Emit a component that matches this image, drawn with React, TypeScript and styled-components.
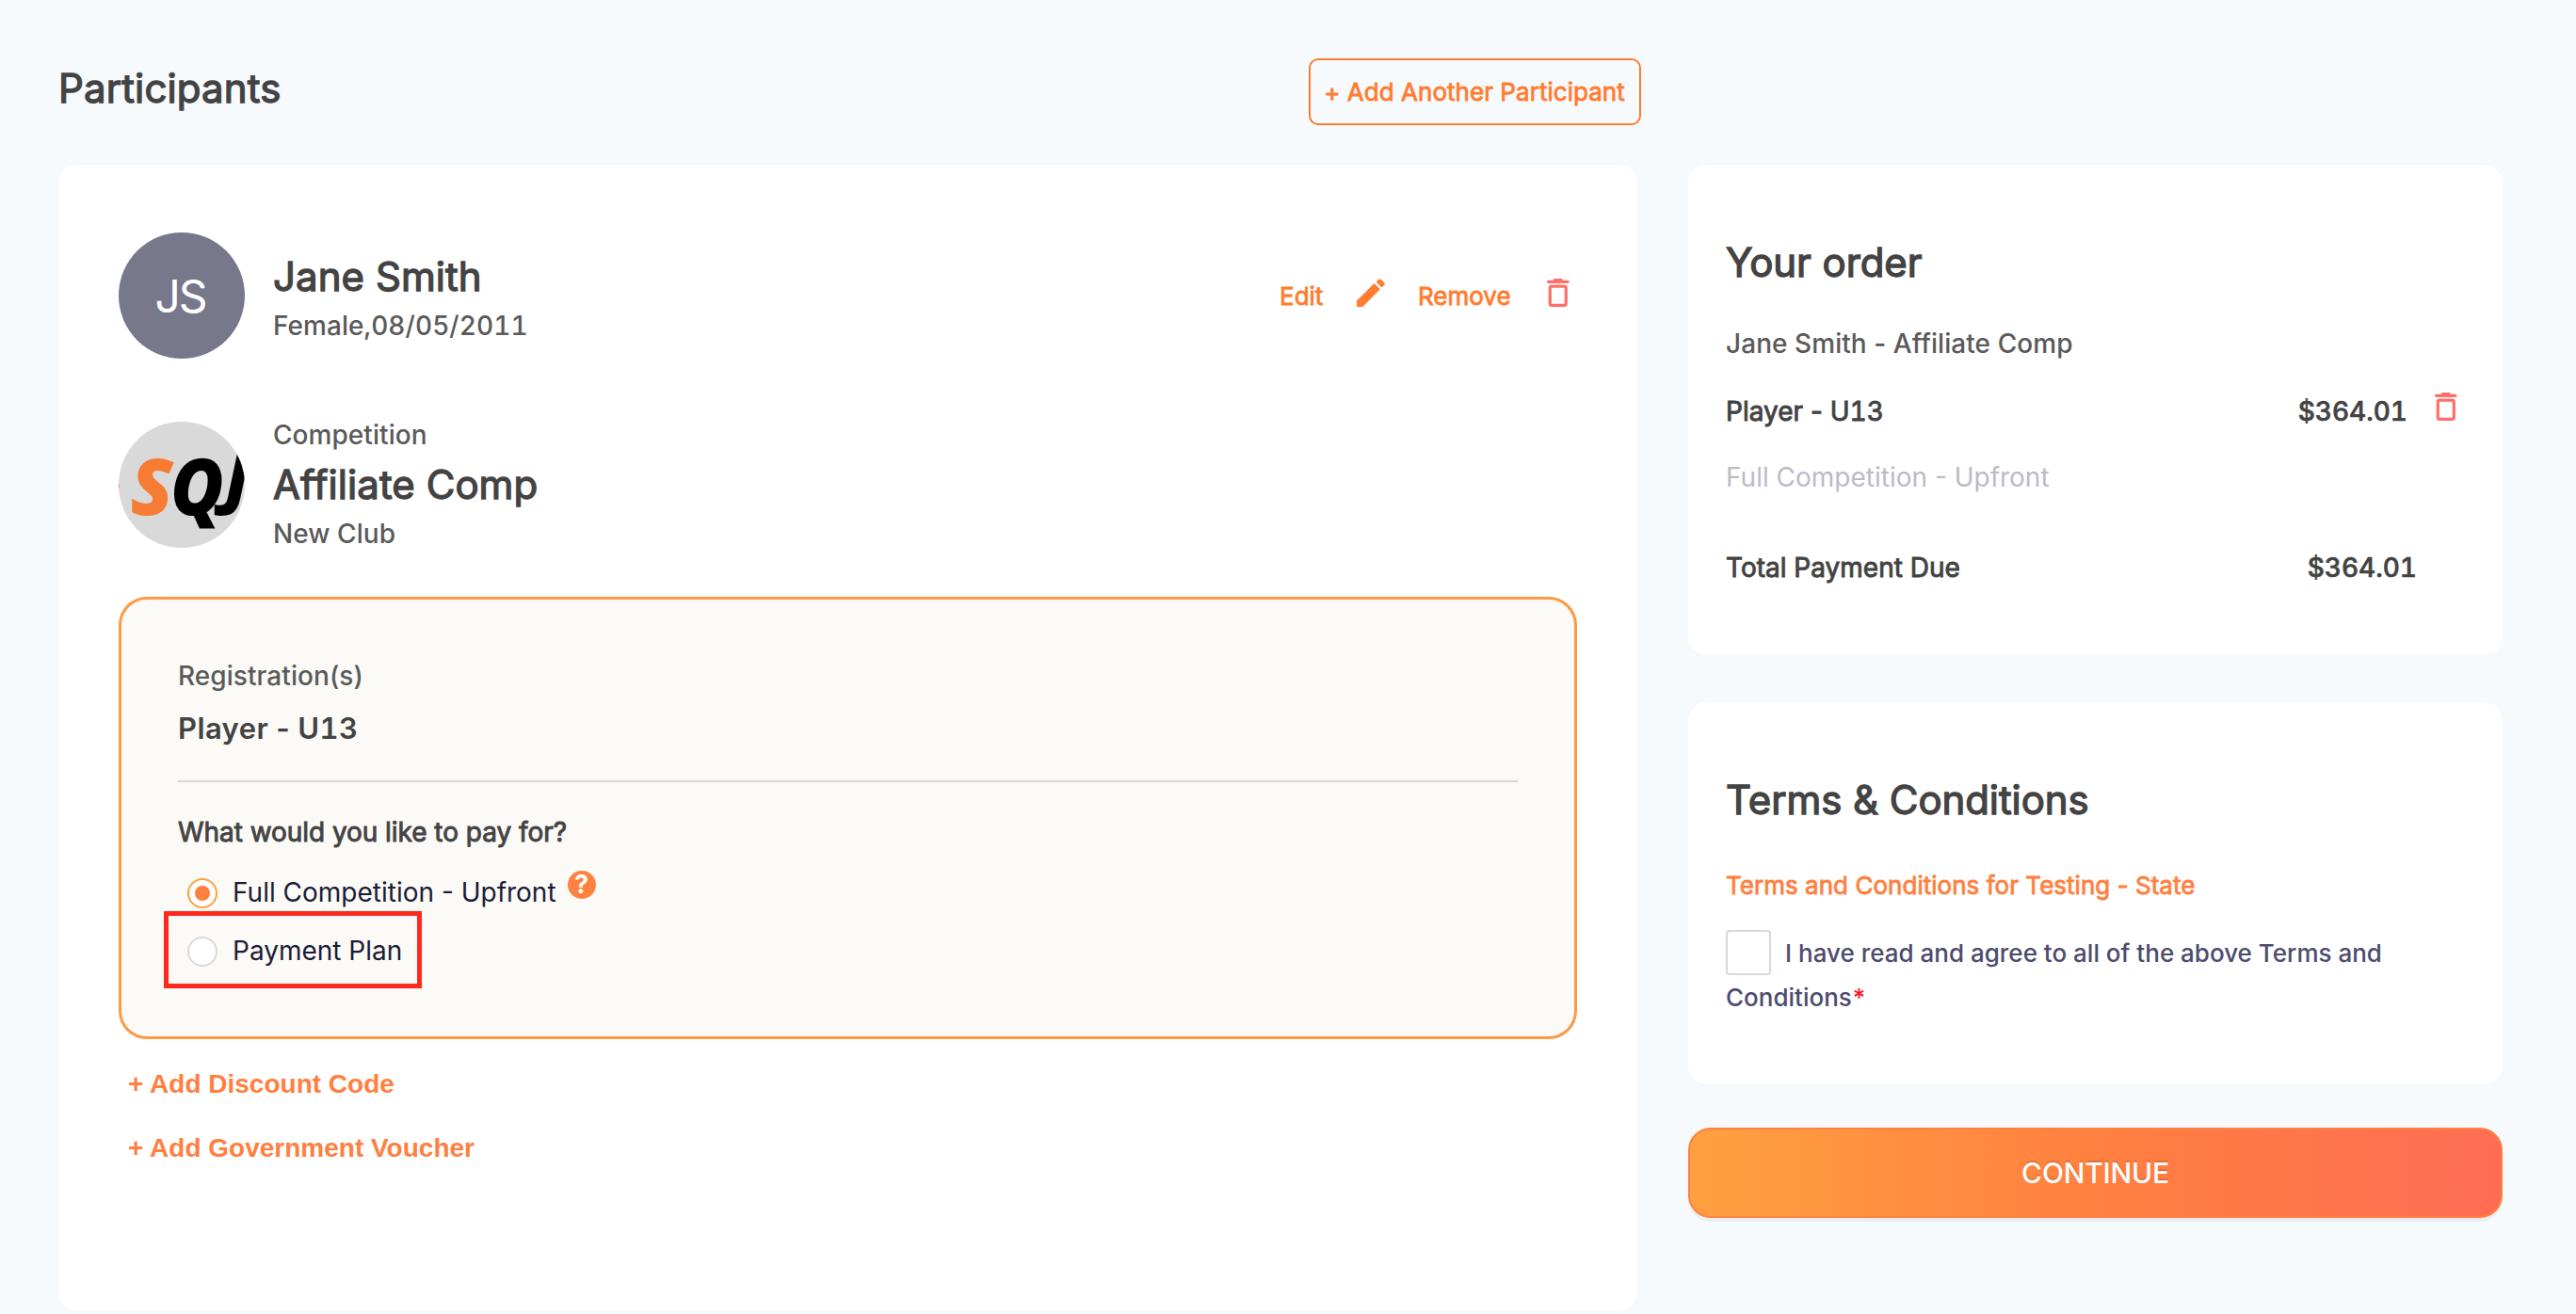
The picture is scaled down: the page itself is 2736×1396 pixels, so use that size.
import styled, { createGlobalStyle, css } from "styled-components";

const GlobalStyle = createGlobalStyle`
  * {
    box-sizing: border-box;
  }
  body {
    margin: 0;
    background: #f6fafd;
    font-family: Inter, "Liberation Sans", sans-serif;
    color: #434343;
    overflow: hidden;
  }
`;

/* thickens the regular cut of the font */
const heavy = (width: number) => css`
  -webkit-text-stroke: ${width}px currentColor;
`;

const Page = styled.div`
  display: grid;
  grid-template-columns: 1681px 865px;
  column-gap: 50px;
  height: 1396px;
  padding: 62px 0 0 62px;
  overflow: hidden;
`;

const Main = styled.main`
  display: flex;
  flex-direction: column;
`;

const Header = styled.header`
  display: flex;
  justify-content: space-between;
  height: 71px;
  margin-bottom: 42px;
`;

const Title = styled.h2`
  margin: 0;
  font-size: 42px;
  font-weight: 400;
  line-height: 60px;
  ${heavy(1.3)}
`;

const PageTitle = styled(Title)`
  line-height: 64px;
  letter-spacing: 0.12px;
`;

const CardTitle = styled(Title)`
  letter-spacing: -0.08px;
`;

const AddButton = styled.button`
  width: 353px;
  padding: 0 1px 0 0;
  border: 2px solid #ff7c30;
  border-radius: 10px;
  background: transparent;
  color: #ff7c30;
  font-family: inherit;
  font-size: 26px;
  letter-spacing: 0.04px;
  ${heavy(0.8)}
`;

const Card = styled.section`
  background: #fff;
  border-radius: 20px;
`;

const ParticipantCard = styled(Card)`
  width: 1677px;
  height: 1217px;
  padding: 72px 64px 0;
`;

const Profile = styled.div`
  display: flex;
  height: 134px;
`;

const Competition = styled.div`
  display: flex;
  height: 156px;
  margin: 55px 0 42px;
`;

const Avatar = styled.div`
  display: flex;
  align-items: center;
  justify-content: center;
  width: 134px;
  height: 134px;
  padding-right: 3px;
  border-radius: 50%;
  background: #78788d;
  color: #fff;
  font-size: 48px;
  letter-spacing: -2px;
`;

const ClubLogo = styled.svg`
  width: 134px;
  height: 134px;
  margin-top: 12px;
  border-radius: 50%;
  background: #d9d9d9;
  font-family: "Open Sans", "Noto Sans", sans-serif;
  font-weight: 800;
  font-style: italic;
`;

const Details = styled.div<{ $top?: number }>`
  margin: ${(p) => p.$top ?? 0}px 0 0 30px;
`;

const Name = styled(Title)`
  line-height: 52px;
  letter-spacing: 0.05px;
`;

const CompetitionName = styled(Name)`
  padding-top: 1px;
`;

const Caption = styled.div<{ $line?: number }>`
  color: #5a5a5a;
  font-size: 28px;
  font-weight: 500;
  line-height: ${(p) => p.$line ?? 52}px;
  letter-spacing: 0.06px;
`;

const Digits = styled.span`
  font-feature-settings: "tnum";
`;

const Actions = styled.div`
  display: flex;
  align-items: center;
  margin: 0 8px 0 auto;
  svg {
    margin-bottom: 6px;
  }
`;

const Action = styled.a<{ $width: number }>`
  width: ${(p) => p.$width}px;
  color: #ff7c30;
  font-size: 26px;
  ${heavy(0.8)}
`;

const PencilSvg = styled.svg`
  width: 30px;
  height: 30px;
  margin-right: 35px;
  fill: #ff7c30;
`;

const TrashSvg = styled.svg`
  flex: none;
  width: 24px;
  height: 30px;
  color: #ff6f69;
`;

const Panel = styled.div`
  height: 470px;
  padding: 53px 60px 0;
  border: 3px solid #ff9a42;
  border-radius: 30px;
  background: #fbfaf6;
`;

const RegistrationName = styled.div`
  font-size: 31px;
  font-weight: 600;
  line-height: 56px;
  letter-spacing: 0.4px;
`;

const Divider = styled.hr`
  height: 2px;
  margin: 27px 0 25px;
  border: 0;
  background: #d9d9d9;
`;

const Strong = styled.div`
  font-size: 28px;
  line-height: 56px;
  ${heavy(0.9)}
`;

const Question = styled(Strong)`
  letter-spacing: -0.05px;
`;

const Options = styled.div`
  margin-top: 6px;
`;

const Option = styled.label`
  position: relative;
  display: flex;
  align-items: center;
  height: 62px;
  padding-left: 10px;
  color: #1c1c37;
  font-size: 28px;
`;

const OptionText = styled.span`
  margin-left: 16px;
  padding-bottom: 2px;
`;

const Radio = styled.span<{ $checked?: boolean }>`
  display: flex;
  align-items: center;
  justify-content: center;
  width: 32px;
  height: 32px;
  border: 2px solid ${(p) => (p.$checked ? "#ff9f40" : "#d9d9d9")};
  border-radius: 50%;
  background: #fff;
  &::after {
    content: "";
    width: 16px;
    height: 16px;
    border-radius: 50%;
    background: ${(p) => (p.$checked ? "#ff8040" : "transparent")};
  }
`;

const Help = styled.span`
  display: flex;
  align-items: center;
  justify-content: center;
  align-self: flex-start;
  width: 30px;
  height: 30px;
  margin: 7px 0 0 12px;
  border-radius: 50%;
  background: #ff8240;
  color: #fff;
  font-size: 27px;
  font-weight: 700;
  line-height: 30px;
`;

const Highlight = styled.span`
  position: absolute;
  left: -15px;
  top: -12px;
  width: 274px;
  height: 82px;
  border: 5px solid #ff2a1d;
`;

const Extras = styled.div`
  display: flex;
  flex-direction: column;
  margin-top: 14px;
  padding-left: 10px;
`;

const ExtraLink = styled.a`
  color: #ff8040;
  font-family: "Liberation Sans", Arial, sans-serif;
  font-size: 28px;
  font-weight: 700;
  line-height: 68px;
`;

const Side = styled.aside`
  padding-top: 113px;
`;

const OrderCard = styled(Card)`
  height: 521px;
  padding: 74px 48px 0 40px;
`;

const OrderRow = styled.div<{ $top: number; $right?: number }>`
  display: flex;
  align-items: center;
  height: 56px;
  margin-top: ${(p) => p.$top}px;
  padding-right: ${(p) => p.$right ?? 0}px;
  svg {
    margin: 0 0 10px 29px;
  }
`;

const Price = styled(Digits)`
  margin-left: auto;
  font-size: 28px;
  font-weight: 500;
  ${heavy(0.6)}
`;

const Muted = styled.span`
  color: #bbbbc6;
  font-size: 28px;
`;

const TermsCard = styled(Card)`
  height: 406px;
  margin: 50px 0 46px;
  padding: 74px 48px 0 40px;
`;

const TermsLink = styled.a`
  display: block;
  margin-top: 36px;
  color: #ff8040;
  font-size: 26px;
  line-height: 50px;
  letter-spacing: 0.03px;
  ${heavy(0.8)}
`;

const Agreement = styled.label`
  display: block;
  margin-top: 23px;
  color: #4c4c6d;
  font-size: 26px;
  font-weight: 500;
  line-height: 47px;
`;

const Checkbox = styled.span`
  display: inline-block;
  width: 48px;
  height: 48px;
  margin: -4px 15px 0 0;
  border: 2px solid #d9d9d9;
  border-radius: 4px;
  background: #fff;
  vertical-align: -14px;
`;

const Required = styled.span`
  display: inline-block;
  margin-left: 1px;
  color: #ff1020;
`;

const ContinueButton = styled.button`
  width: 100%;
  height: 96px;
  border: 2px solid #ff8040;
  border-radius: 24px;
  background: linear-gradient(90deg, #ffa040 0%, #ff8040 50%, #ff6c54 100%);
  box-shadow: 0 4px 0 rgba(0, 0, 0, 0.043);
  color: #fff;
  font-family: inherit;
  font-size: 30px;
  font-weight: 550;
  letter-spacing: -0.2px;
  text-shadow: 0 -2px 0 rgba(0, 0, 0, 0.12);
`;

function Trash() {
  return (
    <TrashSvg viewBox="0 0 24 30">
      <path
        d="M1.6 1.7H6.4L7.8 0H15.6L17 1.7H22a1.6 1.6 0 0 1 0 3.3H1.6a1.6 1.6 0 0 1 0-3.3Z"
        fill="currentColor"
      />
      <rect
        x="3.3"
        y="8.2"
        width="17"
        height="20.2"
        rx="1.8"
        fill="none"
        stroke="currentColor"
        strokeWidth="3.2"
      />
    </TrashSvg>
  );
}

function Pencil() {
  return (
    <PencilSvg viewBox="0 0 30 30">
      <path d="M0 23.6 18.6 5 24.9 11.3 6.3 30H0Z" />
      <path d="M20.6 3.6 23.4.8Q24.5-.4 25.6.7L29.4 4.5Q30.4 5.5 29.4 6.5L26.7 9.4Z" />
    </PencilSvg>
  );
}

export default function App() {
  return (
    <>
      <GlobalStyle />
      <Page>
        <Main>
          <Header>
            <PageTitle>Participants</PageTitle>
            <AddButton>+ Add Another Participant</AddButton>
          </Header>
          <ParticipantCard>
            <Profile>
              <Avatar>JS</Avatar>
              <Details $top={21}>
                <Name>Jane Smith</Name>
                <Caption>
                  <Digits>Female,08/05/2011</Digits>
                </Caption>
              </Details>
              <Actions>
                <Action $width={82}>Edit</Action>
                <Pencil />
                <Action $width={137}>Remove</Action>
                <Trash />
              </Actions>
            </Profile>
            <Competition>
              <ClubLogo viewBox="0 0 134 134">
                <path d="M0 65.5 1 68.5 0 71Z" fill="#f57c32" />
                <text x="12.5" y="98.5" fontSize="83" fill="#f57c32">
                  S
                </text>
                <text transform="translate(55 98.5) scale(.93 1)" fontSize="83">
                  Q
                </text>
                <text x="113" y="84" fontSize="70">
                  J
                </text>
              </ClubLogo>
              <Details>
                <Caption>Competition</Caption>
                <CompetitionName>Affiliate Comp</CompetitionName>
                <Caption>New Club</Caption>
              </Details>
            </Competition>
            <Panel>
              <Caption $line={56}>Registration(s)</Caption>
              <RegistrationName>
                Player - <Digits>U13</Digits>
              </RegistrationName>
              <Divider />
              <Question>What would you like to pay for?</Question>
              <Options>
                <Option>
                  <Radio $checked />
                  <OptionText>Full Competition - Upfront</OptionText>
                  <Help>?</Help>
                </Option>
                <Option>
                  <Radio />
                  <OptionText>Payment Plan</OptionText>
                  <Highlight />
                </Option>
              </Options>
            </Panel>
            <Extras>
              <ExtraLink>+ Add Discount Code</ExtraLink>
              <ExtraLink>+ Add Government Voucher</ExtraLink>
            </Extras>
          </ParticipantCard>
        </Main>
        <Side>
          <OrderCard>
            <CardTitle>Your order</CardTitle>
            <OrderRow $top={28}>
              <Caption>Jane Smith - Affiliate Comp</Caption>
            </OrderRow>
            <OrderRow $top={16}>
              <Strong>
                Player - <Digits>U13</Digits>
              </Strong>
              <Price>$364.01</Price>
              <Trash />
            </OrderRow>
            <OrderRow $top={14}>
              <Muted>Full Competition - Upfront</Muted>
            </OrderRow>
            <OrderRow $top={40} $right={43}>
              <Strong>Total Payment Due</Strong>
              <Price>$364.01</Price>
            </OrderRow>
          </OrderCard>
          <TermsCard>
            <CardTitle>Terms &amp; Conditions</CardTitle>
            <TermsLink>Terms and Conditions for Testing - State</TermsLink>
            <Agreement>
              <Checkbox />I have read and agree to all of the above Terms and
              Conditions<Required>*</Required>
            </Agreement>
          </TermsCard>
          <ContinueButton>CONTINUE</ContinueButton>
        </Side>
      </Page>
    </>
  );
}
